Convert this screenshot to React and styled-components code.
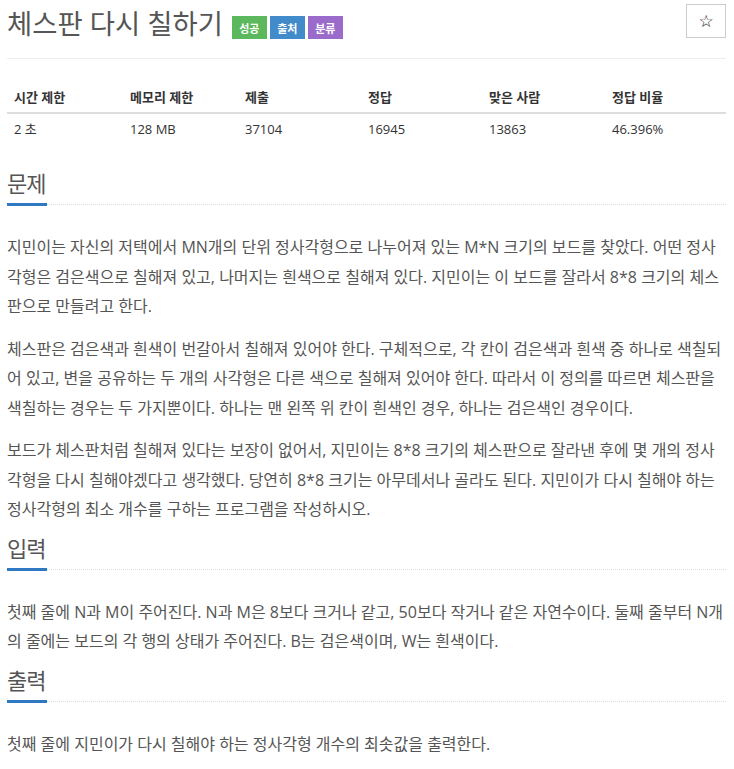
import styled, { createGlobalStyle } from "styled-components";

const GlobalStyle = createGlobalStyle`
  body {
    margin: 0;
    background: #fff;
    font-family: "Open Sans", "Noto Sans CJK KR", sans-serif;
    color: #555;
  }
`;

const Page = styled.div`
  width: 719px;
  padding: 4px 8px 0 7px;
`;

const TitleRow = styled.div`
  display: flex;
  align-items: flex-start;
  height: 44px;
`;

const Title = styled.h1`
  margin: 0;
  font-size: 27.4px;
  font-weight: 400;
  line-height: 40px;
  color: #555;
`;

const Labels = styled.div`
  display: flex;
  gap: 3px;
  margin: 12px 0 0 9px;
`;

const Label = styled.span`
  display: inline-flex;
  align-items: center;
  justify-content: center;
  width: 35px;
  height: 23px;
  background: ${(p) => p.bg};
  color: #fff;
  font-size: 11px;
  font-weight: 700;
`;

const StarButton = styled.button`
  margin-left: auto;
  width: 40px;
  height: 34px;
  background: #fff;
  border: 1px solid #ccc;
  font-size: 17px;
  line-height: 1;
  color: #222;
  padding: 0;
  font-family: "DejaVu Sans", sans-serif;
`;

const Rule = styled.hr`
  margin: 10px 0 21px;
  border: 0;
  border-top: 1px solid #eee;
`;

const Table = styled.div`
  display: grid;
  grid-template-columns: 116px 115px 123px 121px 123px 1fr;
  margin-bottom: 22px;
  font-size: 13px;
  color: #333;
`;

const HeadCell = styled.div`
  padding: 9px 7px 6px;
  line-height: 17px;
  font-weight: 700;
  border-bottom: 2px solid #ddd;
`;

const Cell = styled.div`
  padding: 7px 7px 8px;
  line-height: 17px;
`;

const Section = styled.section``;

const Headline = styled.div`
  border-bottom: 1px dotted #ddd;
  margin-bottom: 28px;
`;

const HeadText = styled.h2`
  margin: 0 0 -2px;
  font-size: 22px;
  font-weight: 400;
  line-height: 30px;
  letter-spacing: -1px;
  white-space: nowrap;
  color: #555;

  &::after {
    content: "";
    display: block;
    width: 40px;
    height: 3px;
    margin-top: 5px;
    background: #2f78c2;
  }
`;

const Para = styled.p`
  margin: 0 0 13px;
  font-size: 16px;
  line-height: 29.5px;
  color: #555;

  &:last-child {
    margin-bottom: 8px;
  }
`;

const head = ["시간 제한", "메모리 제한", "제출", "정답", "맞은 사람", "정답 비율"];
const row = ["2 초", "128 MB", "37104", "16945", "13863", "46.396%"];

export default function App() {
  return (
    <Page>
      <GlobalStyle />
      <TitleRow>
        <Title>체스판 다시 칠하기</Title>
        <Labels>
          <Label bg="#5cb85c">성공</Label>
          <Label bg="#428bca">출처</Label>
          <Label bg="#9b6bcc">분류</Label>
        </Labels>
        <StarButton>☆</StarButton>
      </TitleRow>
      <Rule />
      <Table>
        {head.map((h) => (
          <HeadCell key={h}>{h}</HeadCell>
        ))}
        {row.map((r) => (
          <Cell key={r}>{r}</Cell>
        ))}
      </Table>
      <Section>
        <Headline>
          <HeadText>문제</HeadText>
        </Headline>
        <Para>
          지민이는 자신의 저택에서 MN개의 단위 정사각형으로 나누어져 있는 M*N 크기의 보드를 찾았다. 어떤 정사각형은 검은색으로 칠해져 있고, 나머지는 흰색으로 칠해져 있다. 지민이는 이 보드를 잘라서 8*8 크기의 체스판으로 만들려고 한다.
        </Para>
        <Para>
          체스판은 검은색과 흰색이 번갈아서 칠해져 있어야 한다. 구체적으로, 각 칸이 검은색과 흰색 중 하나로 색칠되어 있고, 변을 공유하는 두 개의 사각형은 다른 색으로 칠해져 있어야 한다. 따라서 이 정의를 따르면 체스판을 색칠하는 경우는 두 가지뿐이다. 하나는 맨 왼쪽 위 칸이 흰색인 경우, 하나는 검은색인 경우이다.
        </Para>
        <Para>
          보드가 체스판처럼 칠해져 있다는 보장이 없어서, 지민이는 8*8 크기의 체스판으로 잘라낸 후에 몇 개의 정사각형을 다시 칠해야겠다고 생각했다. 당연히 8*8 크기는 아무데서나 골라도 된다. 지민이가 다시 칠해야 하는 정사각형의 최소 개수를 구하는 프로그램을 작성하시오.
        </Para>
      </Section>
      <Section>
        <Headline>
          <HeadText>입력</HeadText>
        </Headline>
        <Para>
          첫째 줄에 N과 M이 주어진다. N과 M은 8보다 크거나 같고, 50보다 작거나 같은 자연수이다. 둘째 줄부터 N개의 줄에는 보드의 각 행의 상태가 주어진다. B는 검은색이며, W는 흰색이다.
        </Para>
      </Section>
      <Section>
        <Headline>
          <HeadText>출력</HeadText>
        </Headline>
        <Para>첫째 줄에 지민이가 다시 칠해야 하는 정사각형 개수의 최솟값을 출력한다.</Para>
      </Section>
    </Page>
  );
}
